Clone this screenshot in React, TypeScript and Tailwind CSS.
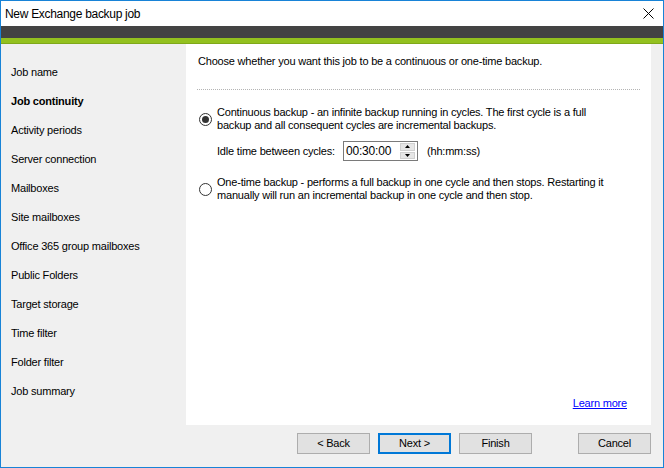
import React from 'react';

const steps = [
  'Job name',
  'Job continuity',
  'Activity periods',
  'Server connection',
  'Mailboxes',
  'Site mailboxes',
  'Office 365 group mailboxes',
  'Public Folders',
  'Target storage',
  'Time filter',
  'Folder filter',
  'Job summary',
];

const Radio: React.FC<{ checked?: boolean }> = ({ checked }) => (
  <div className="w-[13px] h-[13px] rounded-full border border-[#333333] bg-white flex items-center justify-center shrink-0">
    {checked && <div className="w-[7px] h-[7px] rounded-full bg-[#333333]" />}
  </div>
);

const Button: React.FC<{ label: string; primary?: boolean }> = ({ label, primary }) => (
  <button
    className={`w-[73px] h-[21px] bg-[#e1e1e1] text-black flex items-center justify-center shrink-0 ${
      primary ? 'border-2 border-[#0078d7]' : 'border border-[#adadad]'
    }`}
  >
    {label}
  </button>
);

const App: React.FC = () => {
  return (
    <div
      className="w-[664px] h-[468px] border border-[#1883d7] bg-[#f0f0f0] flex flex-col text-black text-[11px] tracking-[-0.2px] overflow-hidden"
      style={{ fontFamily: '"Liberation Sans", Arial, sans-serif' }}
    >
      {/* Title bar */}
      <div className="h-[25px] bg-white flex items-center justify-between pl-[4px] pr-[9px] shrink-0">
        <span className="text-[12px] tracking-[-0.3px]">New Exchange backup job</span>
        <svg width="11" height="11" viewBox="0 0 11 11">
          <path d="M0.5 0.5 L10.5 10.5 M10.5 0.5 L0.5 10.5" stroke="#000" strokeWidth="1" />
        </svg>
      </div>
      <div className="h-[12px] bg-[#434343] shrink-0" />
      <div className="h-[6px] bg-[#93c11f] border-b border-[#7fa81a] shrink-0" />

      {/* Body */}
      <div className="flex flex-1 min-h-0">
        {/* Steps */}
        <div className="w-[185px] pt-[14px] pl-[10px] shrink-0">
          {steps.map((s) => (
            <div
              key={s}
              className={`h-[29px] flex items-center whitespace-nowrap ${s === 'Job continuity' ? 'font-bold' : ''}`}
            >
              {s}
            </div>
          ))}
        </div>

        {/* Main column */}
        <div className="w-[465px] shrink-0 flex flex-col">
          <div className="h-[381px] bg-white flex flex-col pl-[12px] pr-[11px] overflow-hidden">
            <div className="pt-[10px] leading-[15px] whitespace-nowrap">
              Choose whether you want this job to be a continuous or one-time backup.
            </div>
            <div className="mt-[20px] border-t border-dotted border-[#b4b4b4] -ml-px" />

            {/* Continuous */}
            <div className="mt-[16px] flex items-center">
              <div className="ml-[1px] mr-[5px]">
                <Radio checked />
              </div>
              <div className="leading-[13px] whitespace-nowrap">
                <div>Continuous backup - an infinite backup running in cycles. The first cycle is a full</div>
                <div>backup and all consequent cycles are incremental backups.</div>
              </div>
            </div>

            {/* Idle time */}
            <div className="mt-[9px] flex items-center h-[20px] pl-[19px]">
              <span className="w-[126px] shrink-0 whitespace-nowrap">Idle time between cycles:</span>
              <div className="w-[75px] h-[20px] shrink-0 border border-[#7a7a7a] bg-white flex items-center justify-between pl-[2px] pr-[2px]">
                <span className="text-[12px]">00:30:00</span>
                <div className="w-[15px] h-[16px] flex flex-col gap-px">
                  <div className="flex-1 bg-[#e6e6e6] border border-[#d0d0d0] flex items-center justify-center">
                    <svg width="5" height="3" viewBox="0 0 5 3">
                      <path d="M0 3 L2.5 0 L5 3 Z" fill="#000" />
                    </svg>
                  </div>
                  <div className="flex-1 bg-[#e6e6e6] border border-[#d0d0d0] flex items-center justify-center">
                    <svg width="5" height="3" viewBox="0 0 5 3">
                      <path d="M0 0 L2.5 3 L5 0 Z" fill="#000" />
                    </svg>
                  </div>
                </div>
              </div>
              <span className="ml-[9px] whitespace-nowrap">(hh:mm:ss)</span>
            </div>

            {/* One-time */}
            <div className="mt-[15px] flex items-center">
              <div className="ml-[1px] mr-[5px]">
                <Radio />
              </div>
              <div className="leading-[13px] whitespace-nowrap">
                <div>One-time backup - performs a full backup in one cycle and then stops. Restarting it</div>
                <div>manually will run an incremental backup in one cycle and then stop.</div>
              </div>
            </div>

            <div className="flex-1" />
            <div className="flex justify-end pr-[13px] pb-[14px]">
              <a className="text-[#0000ff] underline leading-[15px] cursor-pointer">Learn more</a>
            </div>
          </div>

          {/* Buttons */}
          <div className="mt-[8px] flex items-center pl-[111px]">
            <div className="flex gap-[8px]">
              <Button label="< Back" />
              <Button label="Next >" primary />
              <Button label="Finish" />
            </div>
            <div className="flex-1" />
            <Button label="Cancel" />
          </div>
        </div>
      </div>
    </div>
  );
};

export default App;
